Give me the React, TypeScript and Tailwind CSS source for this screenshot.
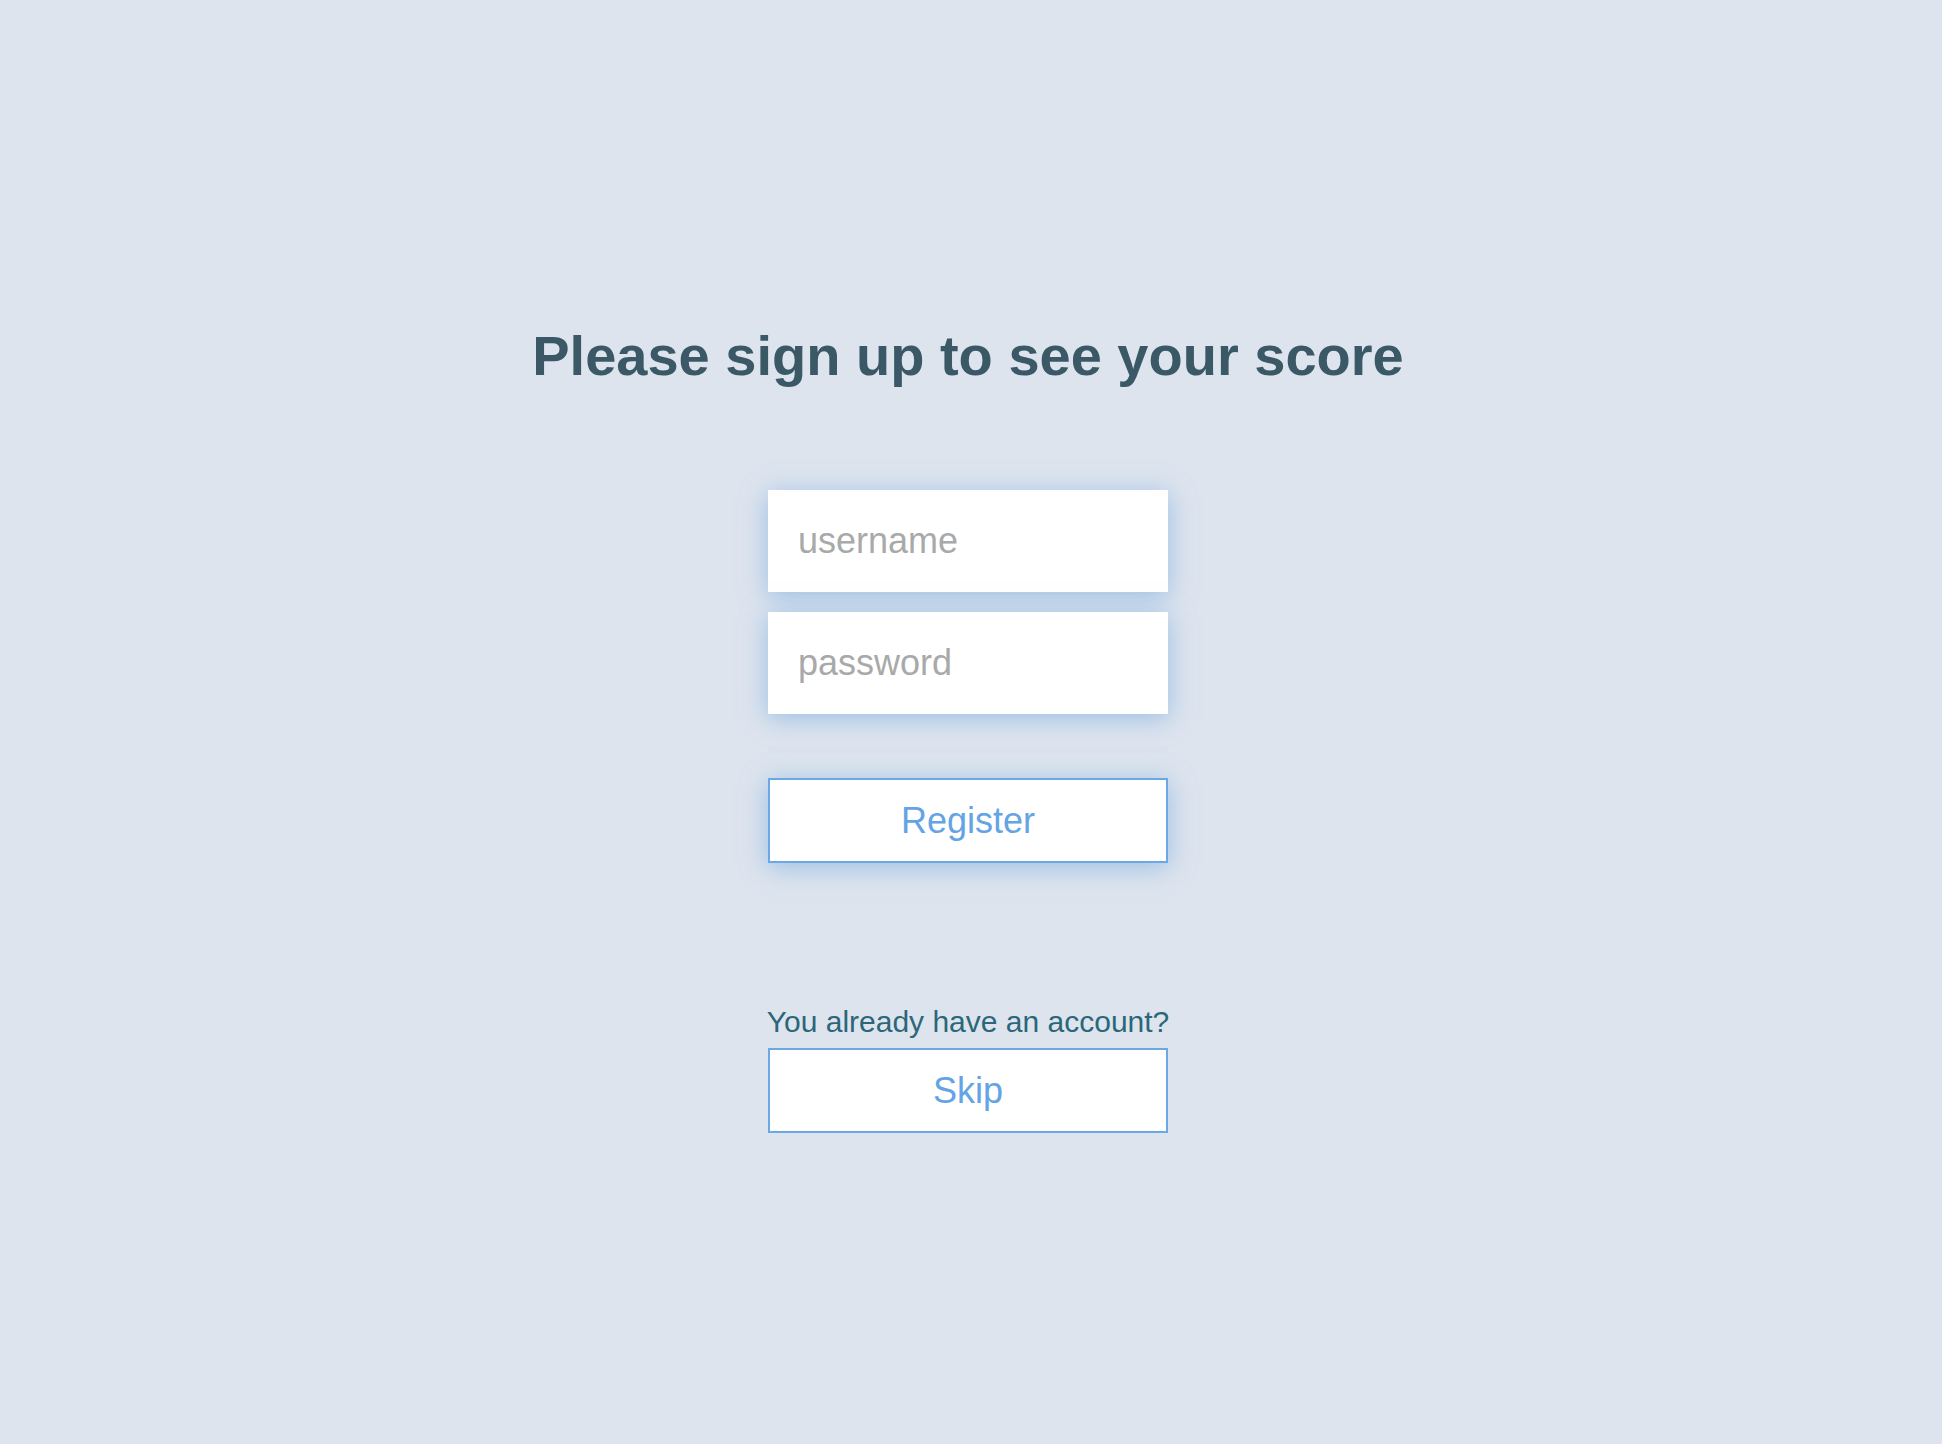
import React from "react";

export default function App() {
  return (
    <div className="min-h-screen w-full bg-[#dde4ee] font-['Liberation_Sans',Arial,sans-serif]">
      <div className="flex flex-col items-center pt-[324px] pr-[6px]">
        <h1 className="text-[56px] font-bold leading-[64px] text-[#3b5866]">
          Please sign up to see your score
        </h1>

        <form
          className="mt-[102px] flex w-[400px] flex-col"
          onSubmit={(e) => e.preventDefault()}
        >
          <div className="flex flex-col gap-[20px]">
            <input
              type="text"
              placeholder="username"
              className="h-[102px] w-full bg-white pl-[30px] text-[36px] text-[#333] placeholder:text-[#a9a9a9] shadow-[0_4px_24px_rgba(110,165,220,0.6)] outline-none"
            />
            <input
              type="password"
              placeholder="password"
              className="h-[102px] w-full bg-white pl-[30px] text-[36px] text-[#333] placeholder:text-[#a9a9a9] shadow-[0_4px_24px_rgba(110,165,220,0.6)] outline-none"
            />
          </div>
          <button
            type="submit"
            className="mt-[64px] h-[85px] w-full border-2 border-[#6aa8e6] bg-white text-[36px] text-[#64a4e4] shadow-[0_4px_24px_rgba(110,165,220,0.6)]"
          >
            Register
          </button>
        </form>

        <div className="mt-[142px] flex w-[400px] flex-col items-center">
          <p className="whitespace-nowrap text-[30px] leading-[34px] text-[#2b6779]">
            You already have an account?
          </p>
          <button
            type="button"
            className="mt-[9px] h-[85px] w-full border-2 border-[#6aa8e6] bg-white text-[36px] text-[#64a4e4]"
          >
            Skip
          </button>
        </div>
      </div>
    </div>
  );
}
